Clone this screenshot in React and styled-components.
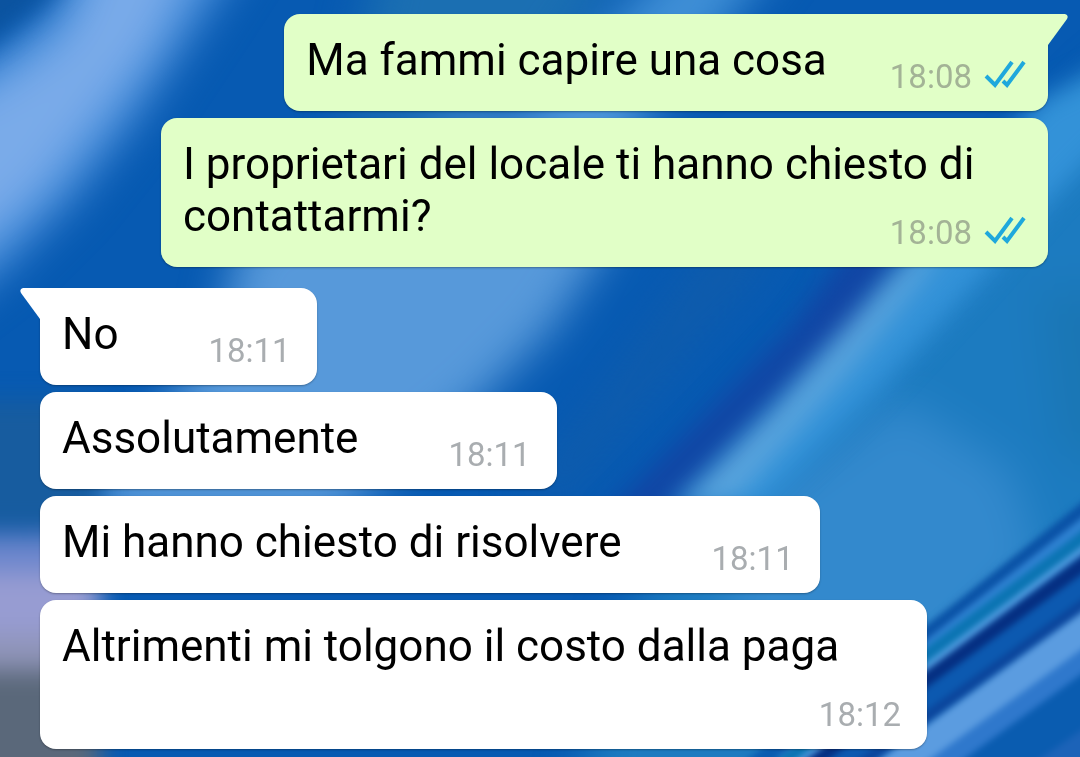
import React from "react";
import styled, { createGlobalStyle } from "styled-components";

const chat = [
  {
    side: "out",
    messages: [
      { text: "Ma fammi capire una cosa", time: "18:08" },
      { text: "I proprietari del locale ti hanno chiesto di contattarmi?", time: "18:08" },
    ],
  },
  {
    side: "in",
    messages: [
      { text: "No", time: "18:11" },
      { text: "Assolutamente", time: "18:11" },
      { text: "Mi hanno chiesto di risolvere", time: "18:11" },
      { text: "Altrimenti mi tolgono il costo dalla paga", time: "18:12" },
    ],
  },
];

// wide diagonal bands, drawn from back to front
const wideBands = [
  { fill: "#4d92de", points: "75,-80 265,-80 200,20 130,125 70,200 0,270 -80,330 -80,100 0,50 60,0" },
  { fill: "#7aabe9", points: "110,-60 200,-60 150,50 90,125 40,190 0,225 -80,280 -80,120 0,80 60,40" },
  { fill: "#1b6fb2", points: "385,-60 640,-60 540,80 420,120 340,120" },
  { fill: "#3f8fd6", points: "690,-60 790,-60 700,60 560,190 420,260 540,100" },
  { fill: "#5799da", points: "460,120 640,120 610,240 550,330 480,400 330,520 60,520 150,430 220,330 240,240" },
  { fill: "#115caa", points: "780,240 700,330 560,500 520,500 600,400 720,240" },
  { fill: "#1c7bc0", points: "1180,20 1100,85 940,265 740,480 620,620 560,860 1180,860" },
  { fill: "#3389cd", points: "900,400 1010,470 1040,560 900,700 700,690 760,500" },
  { fill: "#1a76b4", points: "1040,290 1120,290 1120,470 1060,450" },
];

const tightBands = [
  { fill: "#0b539f", points: "-40,-40 80,-40 40,5 0,35 -40,60" },
  { fill: "#1145a4", points: "930,210 850,320 760,410 650,520 600,520 700,420 790,330 870,220" },
  { fill: "#3392d8", points: "1120,60 1120,130 1050,200 980,280 870,400 760,510 680,510 900,265 1040,100" },
  { fill: "#58a3dc", points: "950,230 925,275 850,370 735,500 670,510 780,400 895,270" },
];

// cloudy patch down the left edge
const haze = [
  { fill: "#175c9f", y: 400, height: 130 },
  { fill: "#6c86cc", y: 535, height: 60 },
  { fill: "#979cd2", y: 572, height: 65 },
  { fill: "#8f94b8", y: 635, height: 35 },
  { fill: "#5a687a", y: 670, height: 130 },
];

const folds = [
  { stroke: "#0a5cb0", d: "M1160 600L760 900", width: 240 },
  { stroke: "#0a52a6", d: "M1160 448L780 750", width: 12 },
  { stroke: "#2f82d2", d: "M1160 463L780 761", width: 10 },
  { stroke: "#0a74b2", d: "M1160 480L780 765", width: 12 },
  { stroke: "#58a4e6", d: "M1160 492L780 776", width: 6 },
  { stroke: "#052f82", d: "M1160 508L780 788", width: 15 },
  { stroke: "#0c59b0", d: "M1160 528L780 806", width: 18 },
  { stroke: "#0b459c", d: "M1160 549L780 822", width: 10 },
  { stroke: "#5b9ce0", d: "M1160 575L780 852", width: 32 },
  { stroke: "#2f78cc", d: "M1160 605L780 880", width: 20 },
  { stroke: "#1c63b8", d: "M1160 700L900 880", width: 40 },
];

const App = () => {
  return (
    <>
      <GlobalStyle />
      <Wallpaper />
      <Conversation>
        {chat.map((group) => (
          <Group key={group.side} $side={group.side}>
            {group.messages.map((message, index) => (
              <Bubble key={message.text} $side={group.side} $first={index === 0}>
                {index === 0 && <Tail side={group.side} />}
                {message.text}
                <Meta $side={group.side}>
                  <time>{message.time}</time>
                  {group.side === "out" && <ReadTicks />}
                </Meta>
              </Bubble>
            ))}
          </Group>
        ))}
      </Conversation>
    </>
  );
};

const Blur = ({ id, size }) => (
  <filter id={id} filterUnits="userSpaceOnUse" x="-100" y="-100" width="1280" height="960" colorInterpolationFilters="sRGB">
    <feGaussianBlur stdDeviation={size} />
  </filter>
);

const Wallpaper = () => (
  <Backdrop viewBox="0 0 1080 757" preserveAspectRatio="xMidYMid slice" aria-hidden="true">
    <defs>
      <Blur id="wide" size="22" />
      <Blur id="tight" size="12" />
      <Blur id="fold" size="3" />
    </defs>
    <rect width="1080" height="757" fill="#075ab2" />
    <g filter="url(#wide)">
      {wideBands.map((band) => (
        <polygon key={band.points} {...band} />
      ))}
    </g>
    <g filter="url(#tight)">
      {tightBands.map((band) => (
        <polygon key={band.points} {...band} />
      ))}
      {haze.map((patch) => (
        <rect key={patch.y} x="-60" width="160" {...patch} />
      ))}
    </g>
    <g filter="url(#fold)">
      {folds.map(({ stroke, d, width }) => (
        <path key={d} d={d} stroke={stroke} strokeWidth={width} />
      ))}
    </g>
  </Backdrop>
);

const Tail = ({ side }) => (
  <TailShape $side={side} viewBox="0 0 20 32" aria-hidden="true">
    <path d="M0 0H17Q21 1 19 5L0 31Z" fill="currentColor" />
  </TailShape>
);

const ReadTicks = () => (
  <Ticks viewBox="0 0 42 34" role="img" aria-label="Letto">
    <path d="M2 16L11 25L28 2M19 21L23 25L40 2" />
  </Ticks>
);

const GlobalStyle = createGlobalStyle`
  body {
    margin: 0;
    background: #075ab2;
    font-family: Roboto, sans-serif;
  }
`;
const Backdrop = styled.svg`
  position: fixed;
  inset: 0;
  width: 100%;
  height: 100%;
  z-index: -1;
`;
const Conversation = styled.main`
  display: flex;
  flex-direction: column;
  gap: 21px;
  padding: 14px 32px 8px 40px;
`;
const Group = styled.section`
  display: flex;
  flex-direction: column;
  align-items: ${({ $side }) => ($side === "out" ? "flex-end" : "flex-start")};
  gap: 7px;
`;
const Bubble = styled.article`
  position: relative;
  display: flow-root;
  box-sizing: border-box;
  max-width: 88%;
  padding: ${({ $side }) => ($side === "out" ? "20px 22px 14px" : "20px 26px 14px 22px")};
  border-radius: 16px;
  border-top-left-radius: ${({ $side, $first }) => ($first && $side === "in" ? 0 : "16px")};
  border-top-right-radius: ${({ $side, $first }) => ($first && $side === "out" ? 0 : "16px")};
  background: ${({ $side }) => ($side === "out" ? "#e1ffc7" : "#fff")};
  box-shadow: 0 1px 2px rgba(0, 0, 0, 0.3);
  color: #000;
  font-size: 44px;
  line-height: 52px;
`;
const Meta = styled.span`
  float: right;
  display: flex;
  align-items: center;
  gap: 12px;
  margin-top: 23px;
  margin-left: ${({ $side }) => ($side === "out" ? "63px" : "90px")};
  color: ${({ $side }) => ($side === "out" ? "#a3b396" : "#a9adb0")};
  font-size: 33px;
  line-height: 40px;
`;
const TailShape = styled.svg`
  position: absolute;
  top: 0;
  left: 100%;
  width: 20px;
  height: 32px;
  color: #e1ffc7;
  ${({ $side }) =>
    $side === "in" &&
    `
    left: auto;
    right: 100%;
    color: #fff;
    transform: scaleX(-1);
  `}
`;
const Ticks = styled.svg`
  width: 42px;
  height: 34px;
  fill: none;
  stroke: #1fa8dc;
  stroke-width: 4;
`;

export default App;
